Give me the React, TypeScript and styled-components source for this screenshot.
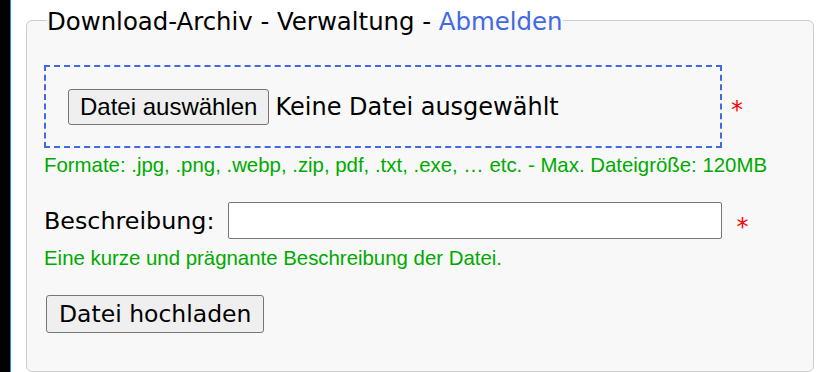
import React, { useState } from "react";
import styled, { createGlobalStyle } from "styled-components";

const GlobalStyle = createGlobalStyle`
  html, body {
    margin: 0;
    padding: 0;
    background: #fff;
  }
  body {
    font-family: "DejaVu Sans", Verdana, sans-serif;
    color: #000;
  }
`;

const Page = styled.div`
  display: flex;
  min-height: 372px;
`;

const SideEdge = styled.div`
  width: 10px;
  flex-shrink: 0;
  background: #000;
  border-right: 1px solid #1e8fff;
`;

const Main = styled.main`
  flex: 1;
  padding: 4px 6px 0 15px;
`;

const Panel = styled.fieldset`
  margin: 0;
  padding: 29px 17px 38px;
  background: #f8f8f8;
  border: 1px solid #ccc;
  border-radius: 6px;
`;

const Legend = styled.legend`
  margin-left: 3px;
  padding: 3px 0 0;
  font-size: 24.4px;
  line-height: normal;
`;

const LogoutLink = styled.a`
  color: #4169e1;
  text-decoration: none;
`;

const Form = styled.form`
  display: flex;
  flex-direction: column;
  align-items: flex-start;
`;

const Row = styled.div<{ $gap?: number }>`
  display: flex;
  align-items: center;
  gap: ${(p) => p.$gap ?? 9}px;
  margin-top: ${(p) => (p.$gap ? 25 : 0)}px;
`;

const DropZone = styled.label`
  box-sizing: border-box;
  width: 678px;
  height: 83px;
  display: flex;
  align-items: center;
  padding: 0 22px;
  border: 2px dashed #4169e1;
  cursor: pointer;
`;

const HiddenInput = styled.input`
  display: none;
`;

const PickButton = styled.span`
  box-sizing: border-box;
  height: 36px;
  display: inline-flex;
  align-items: center;
  padding: 0 11px;
  font-family: "Liberation Sans", Arial, sans-serif;
  font-size: 24px;
  background: #efefef;
  border: 1px solid #767676;
  border-radius: 3px;
`;

const FileName = styled.span`
  margin-left: 6px;
  font-size: 24px;
`;

const Required = styled.span<{ $shift?: number }>`
  color: #ff0000;
  font-size: 24px;
  line-height: 1;
  padding-top: ${(p) => p.$shift ?? 8}px;
`;

const Hint = styled.p<{ $top: number }>`
  margin: ${(p) => p.$top}px 0 0;
  font-family: "Liberation Sans", Arial, sans-serif;
  font-size: 20.4px;
  color: #00aa00;
`;

const FieldLabel = styled.label`
  font-size: 23.8px;
`;

const TextInput = styled.input`
  box-sizing: border-box;
  width: 494px;
  height: 37px;
  padding: 2px 6px;
  font-size: 20px;
  background: #fff;
  border: 1px solid #767676;
  border-radius: 2px;
`;

const SubmitButton = styled.button`
  box-sizing: border-box;
  margin: 25px 0 0 2px;
  height: 38px;
  padding: 0 12px;
  font-family: "DejaVu Sans", Verdana, sans-serif;
  font-size: 23.5px;
  color: #000;
  background: #efefef;
  border: 1px solid #767676;
  border-radius: 3px;
`;

export default function App() {
  const [fileName, setFileName] = useState("");
  const [desc, setDesc] = useState("");

  const onFile = (e: React.ChangeEvent<HTMLInputElement>) => {
    const f = e.target.files?.[0];
    setFileName(f ? f.name : "");
  };

  return (
    <Page>
      <GlobalStyle />
      <SideEdge />
      <Main>
        <Panel>
          <Legend>
            Download-Archiv - Verwaltung - <LogoutLink href="#">Abmelden</LogoutLink>
          </Legend>
          <Form onSubmit={(e) => e.preventDefault()}>
            <Row>
              <DropZone>
                <HiddenInput type="file" onChange={onFile} />
                <PickButton>Datei auswählen</PickButton>
                <FileName>{fileName || "Keine Datei ausgewählt"}</FileName>
              </DropZone>
              <Required $shift={6}>*</Required>
            </Row>
            <Hint $top={6}>
              Formate: .jpg, .png, .webp, .zip, pdf, .txt, .exe, … etc. - Max. Dateigröße: 120MB
            </Hint>
            <Row $gap={14}>
              <FieldLabel htmlFor="beschreibung">Beschreibung:</FieldLabel>
              <TextInput
                id="beschreibung"
                value={desc}
                onChange={(e) => setDesc(e.target.value)}
              />
              <Required $shift={12}>*</Required>
            </Row>
            <Hint $top={8}>Eine kurze und prägnante Beschreibung der Datei.</Hint>
            <SubmitButton type="submit">Datei hochladen</SubmitButton>
          </Form>
        </Panel>
      </Main>
    </Page>
  );
}
